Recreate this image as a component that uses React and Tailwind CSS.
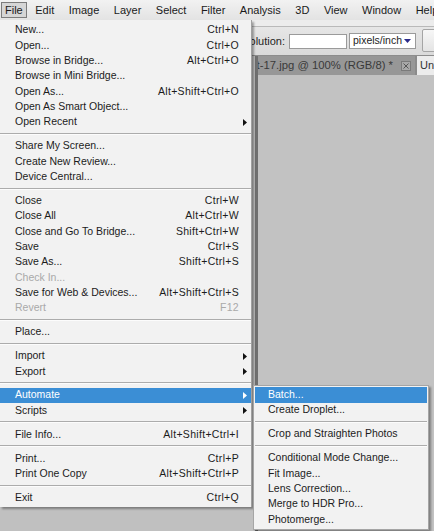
import React from "react";

const SEP = "sep";

const mainItems = [
  { t: "New...", k: "Ctrl+N" },
  { t: "Open...", k: "Ctrl+O" },
  { t: "Browse in Bridge...", k: "Alt+Ctrl+O" },
  { t: "Browse in Mini Bridge..." },
  { t: "Open As...", k: "Alt+Shift+Ctrl+O" },
  { t: "Open As Smart Object..." },
  { t: "Open Recent", arrow: true },
  SEP,
  { t: "Share My Screen..." },
  { t: "Create New Review..." },
  { t: "Device Central..." },
  SEP,
  { t: "Close", k: "Ctrl+W" },
  { t: "Close All", k: "Alt+Ctrl+W" },
  { t: "Close and Go To Bridge...", k: "Shift+Ctrl+W" },
  { t: "Save", k: "Ctrl+S" },
  { t: "Save As...", k: "Shift+Ctrl+S" },
  { t: "Check In...", dis: true },
  { t: "Save for Web & Devices...", k: "Alt+Shift+Ctrl+S" },
  { t: "Revert", k: "F12", dis: true },
  SEP,
  { t: "Place..." },
  SEP,
  { t: "Import", arrow: true },
  { t: "Export", arrow: true },
  SEP,
  { t: "Automate", arrow: true, hi: true },
  { t: "Scripts", arrow: true },
  SEP,
  { t: "File Info...", k: "Alt+Shift+Ctrl+I" },
  SEP,
  { t: "Print...", k: "Ctrl+P" },
  { t: "Print One Copy", k: "Alt+Shift+Ctrl+P" },
  SEP,
  { t: "Exit", k: "Ctrl+Q" },
];

const subItems = [
  { t: "Batch...", hi: true },
  { t: "Create Droplet..." },
  SEP,
  { t: "Crop and Straighten Photos" },
  SEP,
  { t: "Conditional Mode Change..." },
  { t: "Fit Image..." },
  { t: "Lens Correction..." },
  { t: "Merge to HDR Pro..." },
  { t: "Photomerge..." },
];

const Arrow = () => (
  <svg width="4" height="7" viewBox="0 0 4 7" className="block">
    <path d="M0 0 L4 3.5 L0 7 Z" fill="currentColor" />
  </svg>
);

function Separator() {
  return (
    <div className="h-[8.6px] pt-[3px]">
      <div className="h-px bg-[#acacac]" />
      <div className="h-px bg-[#fcfcfc]" />
    </div>
  );
}

function MenuRow({ item, padLeft }) {
  const color = item.hi
    ? "bg-[#3b8ed5] text-white"
    : item.dis
    ? "text-[#a9a9a9]"
    : "text-[#1c1c1c]";
  return (
    <div
      className={`flex h-[15.35px] items-center justify-between ${padLeft} ${
        item.arrow ? "pr-[4px]" : "pr-[12px]"
      } ${color}`}
    >
      <span className="whitespace-nowrap">{item.t}</span>
      {item.k && <span className="whitespace-nowrap tracking-[0.3px]">{item.k}</span>}
      {item.arrow && (
        <span className={item.hi ? "text-white" : "text-[#111]"}>
          <Arrow />
        </span>
      )}
    </div>
  );
}

const barItems = ["Edit", "Image", "Layer", "Select", "Filter", "Analysis", "3D", "View", "Window", "Help"];

export default function App() {
  return (
    <div className="relative h-[531px] w-[434px] overflow-hidden bg-[#c1c1c1] font-['Liberation_Sans',Arial,sans-serif]">
      {/* Menu bar */}
      <div className="flex h-[20px] items-center bg-gradient-to-b from-[#f2f2f2] to-[#e3e3e3] text-[11px] text-[#1a1a1a]">
        <span className="ml-[1px] mr-[-6px] flex h-[16px] items-center border border-[#7c7c7c] bg-[#d6d6d6] px-[3px]">
          File
        </span>
        {barItems.map((b) => (
          <span key={b} className="ml-[14.5px] whitespace-nowrap">
            {b}
          </span>
        ))}
      </div>

      {/* Application / options bars */}
      <div className="h-[7px] border-b border-[#b9b9b9] bg-[#ececec]" />
      <div className="flex h-[29px] items-center border-b border-[#8d8d8d] bg-gradient-to-b from-[#e6e6e6] to-[#dadada] text-[11px] text-[#1e1e1e]">
        <div className="w-[252px] shrink-0" />
        <div className="flex w-[33px] shrink-0 justify-end overflow-hidden">
          <span className="shrink-0 whitespace-nowrap">Resolution:</span>
        </div>
        <div className="ml-[4px] h-[15px] w-[58px] shrink-0 border border-[#9a9a9a] bg-white" />
        <div className="ml-[2px] flex h-[16px] w-[67px] shrink-0 items-center justify-between border border-[#9a9a9a] bg-white pl-[3px] pr-[4px] text-[10.5px]">
          <span>pixels/inch</span>
          <svg width="7" height="4" viewBox="0 0 7 4">
            <path d="M0 0 H7 L3.5 4 Z" fill="#2a2a8a" />
          </svg>
        </div>
        <div className="mb-[3px] ml-[6px] h-[23px] w-[40px] shrink-0 self-end rounded-[2px] border border-[#a5a5a5] bg-gradient-to-b from-[#f7f7f7] to-[#e4e4e4]" />
      </div>

      {/* Workspace */}
      <div className="flex h-[475px]">
        <div className="w-[255px] shrink-0 bg-[#c0c0c0]" />
        <div className="flex min-w-0 flex-1 flex-col border-l-[3px] border-[#6f6f6f]">
          <div className="flex h-[19px] shrink-0 justify-end overflow-hidden bg-[#8b8b8b]">
            <div className="flex shrink-0 items-center bg-[#979797] pr-[4px] text-[11.3px] text-[#3a3a3a]">
              <span className="whitespace-nowrap">Portrait-17.jpg @ 100% (RGB/8) *</span>
              <span className="ml-[8px] flex h-[10px] w-[10px] items-center justify-center border border-[#7a7a7a] bg-[#a8a8a8]">
                <svg width="6" height="6" viewBox="0 0 6 6">
                  <path d="M0.5 0.5 L5.5 5.5 M5.5 0.5 L0.5 5.5" stroke="#555" strokeWidth="1" />
                </svg>
              </span>
            </div>
            <div className="ml-[2px] flex w-[17px] shrink-0 items-center overflow-hidden bg-[#ececec] pl-[3px] text-[11px] text-[#333]">
              <span className="whitespace-nowrap">Untitled-1</span>
            </div>
          </div>
          <div className="flex-1 bg-[#c2c2c2]" />
        </div>
      </div>

      {/* File menu dropdown */}
      <div className="absolute left-0 top-[20px] w-[252px] border-r border-[#a0a0a0] bg-[#f2f2f2] pb-[1.5px] pt-[2.5px] text-[10.5px] shadow-[2px_2px_2px_rgba(0,0,0,0.35)]">
        {mainItems.map((it, i) =>
          it === SEP ? <Separator key={i} /> : <MenuRow key={i} item={it} padLeft="pl-[15px]" />
        )}
      </div>

      {/* Automate submenu */}
      <div className="absolute left-[253px] top-[385px] w-[176px] border border-[#a5a5a5] bg-[#f2f2f2] px-[1px] pb-[1.5px] pt-[1.3px] text-[10.5px] shadow-[2px_2px_2px_rgba(0,0,0,0.35)]">
        {subItems.map((it, i) =>
          it === SEP ? <Separator key={i} /> : <MenuRow key={i} item={it} padLeft="pl-[13px]" />
        )}
      </div>
    </div>
  );
}
